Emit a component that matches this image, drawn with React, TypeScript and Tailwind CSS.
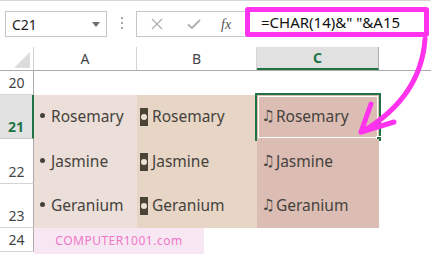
import React from "react";

const rows = [
  { n: 21, name: "Rosemary", h: "h-[44px]" },
  { n: 22, name: "Jasmine", h: "h-[45px]" },
  { n: 23, name: "Geranium", h: "h-[44px]" },
];

const InverseBullet = () => (
  <span className="mr-[4px] flex h-[18px] w-[8px] items-center justify-center bg-[#4b4436]">
    <span className="h-[6px] w-[6px] rounded-full bg-[#ece3d7]" />
  </span>
);

export default function App() {
  return (
    <div
      className="relative h-[265px] w-[431px] overflow-hidden border-t border-[#d6d6d6] bg-white"
      style={{ fontFamily: '"Noto Sans", "Open Sans", sans-serif' }}
    >
      {/* formula bar */}
      <div className="flex h-[46px] items-start">
        <div className="ml-[5px] mt-[10px] flex h-[26px] w-[102px] items-center justify-between border border-[#c6c6c6] pl-[6px] pr-[6px] text-[14px] text-[#222]">
          <span>C21</span>
          <span className="h-0 w-0 border-x-[4px] border-t-[5px] border-x-transparent border-t-[#6d6d6d]" />
        </div>
        <div className="mt-[16px] ml-[14px] flex flex-col gap-[3px]">
          <span className="h-[2px] w-[2px] bg-[#a8a8a8]" />
          <span className="h-[2px] w-[2px] bg-[#a8a8a8]" />
          <span className="h-[2px] w-[2px] bg-[#a8a8a8]" />
        </div>
        <div className="ml-[13px] mt-[10px] flex h-[26px] w-[112px] items-center border border-[#c6c6c6] text-[#b5b5b5]">
          <svg width="12" height="12" viewBox="0 0 12 12" className="ml-[14px]">
            <path d="M1 1L11 11M11 1L1 11" stroke="#b0b0b0" strokeWidth="1.4" fill="none" />
          </svg>
          <svg width="14" height="12" viewBox="0 0 14 12" className="ml-[24px]">
            <path d="M1 6.5L5 10L13 2" stroke="#b0b0b0" strokeWidth="2" fill="none" />
          </svg>
          <span
            className="ml-[20px] text-[14px] italic text-[#555]"
            style={{ fontFamily: '"Liberation Serif", serif' }}
          >
            fx
          </span>
        </div>
        <div className="-ml-[3px] mt-[6px] flex h-[30px] w-[184px] items-center rounded-[3px] border-[5px] border-[#ff33ee] bg-white pl-[11px] text-[15px] text-[#111]">
          =CHAR(14)&amp;" "&amp;A15
        </div>
      </div>

      {/* column headers */}
      <div className="flex h-[24px] border-b border-[#ababab] text-[14px] text-[#444]">
        <div className="relative w-[34px] border-r border-[#d4d4d4]">
          <span className="absolute bottom-[2px] right-[3px] h-0 w-0 border-b-[16px] border-l-[16px] border-b-[#dcdcdc] border-l-transparent" />
        </div>
        <div className="flex w-[103px] items-center justify-center border-r border-[#d4d4d4]">A</div>
        <div className="flex w-[120px] items-center justify-center border-r border-[#d4d4d4]">B</div>
        <div className="flex w-[122px] items-center justify-center border-b-2 border-r border-b-[#217346] border-r-[#ababab] bg-[#e1e1e1] font-bold text-[#217346]">
          C
        </div>
        <div className="flex-1" />
      </div>

      {/* row 20 */}
      <div className="flex h-[24px]">
        <div className="flex w-[34px] items-end justify-center border-b border-r border-b-[#d4d4d4] border-r-[#ababab] pb-[1px] text-[14px] text-[#444]">
          20
        </div>
        <div className="flex-1" />
      </div>

      {/* data rows */}
      {rows.map((r) => {
        const sel = r.n === 21;
        return (
          <div key={r.n} className={`flex ${r.h} text-[15.5px] text-[#45423c]`}>
            <div
              className={
                sel
                  ? "flex w-[34px] items-end justify-center border-b border-r-2 border-b-[#c9c9c9] border-r-[#217346] bg-[#e1e1e1] pb-[1px] text-[14px] font-bold text-[#217346]"
                  : "flex w-[34px] items-end justify-center border-b border-r border-b-[#d4d4d4] border-r-[#ababab] pb-[1px] text-[14px] text-[#444]"
              }
            >
              {r.n}
            </div>
            <div className="flex w-[103px] items-center bg-[#ecdfd9] pl-[6px]">
              <span className="mb-[3px] mr-[6px] h-[5px] w-[5px] rounded-full bg-[#45423c]" />
              {r.name}
            </div>
            <div className="flex w-[120px] items-center bg-[#e7d6c6] pl-[3px]">
              <InverseBullet />
              {r.name}
            </div>
            <div
              className={
                sel
                  ? "relative flex w-[122px] items-center bg-[#dcbdb4] pl-[4px] outline-2 outline-[#217346]"
                  : "relative flex w-[122px] items-center bg-[#dcbdb4] pl-[4px]"
              }
            >
              <span className="mr-[1px]" style={{ fontFamily: '"DejaVu Sans", sans-serif' }}>
                ♫
              </span>
              {r.name}
              {sel && (
                <>
                  <span className="pointer-events-none absolute inset-[1px] border border-white" />
                  <span className="absolute -bottom-[3px] -right-[3px] h-[6px] w-[6px] border border-white bg-[#217346]" />
                </>
              )}
            </div>
            <div className="flex-1" />
          </div>
        );
      })}

      {/* row 24 */}
      <div className="flex h-[24px]">
        <div className="flex w-[34px] items-end justify-center border-b border-r border-b-[#d4d4d4] border-r-[#ababab] pb-[1px] text-[14px] text-[#444]">
          24
        </div>
        <div className="flex h-[26px] w-[170px] items-center justify-center bg-[#f7e7f2] text-[12px] tracking-[0.5px] text-[#ee77c9]">
          COMPUTER1001.com
        </div>
      </div>

      {/* callout arrow */}
      <svg className="pointer-events-none absolute left-0 top-0" width="431" height="265">
        <path
          d="M425 38 Q421 96 362 131 M371 103 L361 131 L394 121"
          stroke="#ff33ee"
          strokeWidth="5"
          strokeLinecap="round"
          strokeLinejoin="round"
          fill="none"
        />
      </svg>
    </div>
  );
}
